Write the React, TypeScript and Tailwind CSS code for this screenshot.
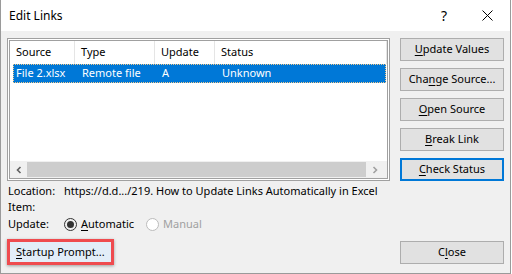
import React from 'react';

const font = { fontFamily: '"Noto Sans", "Open Sans", sans-serif' };

function Btn({ pre, key1, post, focused }: { pre: string; key1: string; post: string; focused?: boolean }) {
  return (
    <div
      className={`h-[23px] w-[104px] flex items-center justify-center bg-[#e1e1e1] text-[11px] text-black whitespace-nowrap ${
        focused ? 'border-2 border-[#0078d7]' : 'border border-[#adadad]'
      }`}
    >
      <span>
        {pre}
        <span className="underline underline-offset-2">{key1}</span>
        {post}
      </span>
    </div>
  );
}

export default function App() {
  return (
    <div className="w-[512px] h-[274px] bg-white whitespace-nowrap" style={font}>
      <div className="w-[511px] h-[274px] flex flex-col border-l border-r border-b border-[#9a9a9a]">
        {/* Title bar */}
        <div className="h-[31px] flex items-center bg-white pl-[8px]">
          <span className="text-[12px] text-black flex-1">Edit Links</span>
          <span className="text-[14px] text-black w-[44px] text-center">?</span>
          <div className="w-[44px] flex justify-center pr-[2px]">
            <svg width="11" height="11" viewBox="0 0 11 11">
              <path d="M0.5 0.5 L10.5 10.5 M10.5 0.5 L0.5 10.5" stroke="#000" strokeWidth="1" />
            </svg>
          </div>
        </div>

        {/* Body */}
        <div className="flex-1 bg-[#f0f0f0] flex gap-[10px] pl-[6px] pr-[6px] pt-[7px] pb-[8px]">
          {/* Left column */}
          <div className="w-[384px] flex flex-col">
            <div className="h-[143px] border border-[#a0a0a0] bg-white p-px">
              <div className="h-full border border-[#a0a0a0] bg-white flex flex-col text-[11px]">
                <div className="h-[23px] flex items-center text-black">
                  <div className="w-[65px] h-full flex items-center pl-[6px] border-r border-[#e5e5e5]">Source</div>
                  <div className="w-[80px] h-full flex items-center pl-[6px] border-r border-[#e5e5e5]">Type</div>
                  <div className="w-[60px] h-full flex items-center pl-[6px] border-r border-[#e5e5e5]">Update</div>
                  <div className="w-[172px] h-full flex items-center pl-[6px] border-r border-[#e5e5e5]">Status</div>
                </div>
                <div className="pl-[3px] pr-[1px]">
                  <div className="h-[19px] flex items-center bg-[#0078d7] text-white border border-dotted border-[#f3c98a]">
                    <div className="w-[65px] pl-[2px]">File 2.xlsx</div>
                    <div className="w-[80px] pl-[3px]">Remote file</div>
                    <div className="w-[60px] pl-[3px]">A</div>
                    <div className="pl-[3px]">Unknown</div>
                  </div>
                </div>
                <div className="flex-1" />
                <div className="h-[17px] flex items-stretch bg-[#f0f0f0]">
                  <div className="w-[17px] flex items-center justify-center">
                    <svg width="8" height="8" viewBox="0 0 8 8">
                      <path d="M5.5 1 L2.5 4 L5.5 7" stroke="#606060" strokeWidth="1.6" fill="none" />
                    </svg>
                  </div>
                  <div className="flex-1 my-[1px] bg-[#cdcdcd]" />
                  <div className="w-[17px] flex items-center justify-center">
                    <svg width="8" height="8" viewBox="0 0 8 8">
                      <path d="M2.5 1 L5.5 4 L2.5 7" stroke="#a0a0a0" strokeWidth="1.6" fill="none" />
                    </svg>
                  </div>
                  <div className="w-[4px]" />
                </div>
              </div>
            </div>

            <div className="text-[11px] text-black pl-px mt-[2px]">
              <div className="h-[16px] flex items-center">
                <span className="w-[56px]">Location:</span>
                <span>https://d.d.../219. How to Update Links Automatically in Excel</span>
              </div>
              <div className="h-[16px] flex items-center">Item:</div>
              <div className="h-[18px] flex items-center">
                <span className="w-[56px]">Update:</span>
                <span className="w-[13px] h-[13px] rounded-full border border-[#333] flex items-center justify-center">
                  <span className="w-[7px] h-[7px] rounded-full bg-[#333]" />
                </span>
                <span className="ml-[4px] w-[65px]">
                  <span className="underline underline-offset-2">A</span>utomatic
                </span>
                <span className="w-[13px] h-[13px] rounded-full border border-[#bcbcbc] bg-white" />
                <span className="ml-[4px] text-[#a0a0a0]">Manual</span>
              </div>
            </div>

            <div className="flex-1" />
            <div className="w-[107px] h-[26px] border-[3px] border-[#ef4b4f] shadow-[0_1px_3px_rgba(0,0,0,0.35)] bg-[#e2edf8] flex items-center pl-[6px] text-[11px] text-black">
              <span>
                <span className="underline underline-offset-2">S</span>tartup Prompt...
              </span>
            </div>
          </div>

          {/* Right column */}
          <div className="flex flex-col gap-[7px]">
            <Btn pre="" key1="U" post="pdate Values" />
            <Btn pre="Cha" key1="n" post="ge Source..." />
            <Btn pre="" key1="O" post="pen Source" />
            <Btn pre="" key1="B" post="reak Link" />
            <Btn pre="" key1="C" post="heck Status" focused />
            <div className="flex-1" />
            <div className="mb-px">
              <Btn pre="C" key1="l" post="ose" />
            </div>
          </div>
        </div>
      </div>
    </div>
  );
}
